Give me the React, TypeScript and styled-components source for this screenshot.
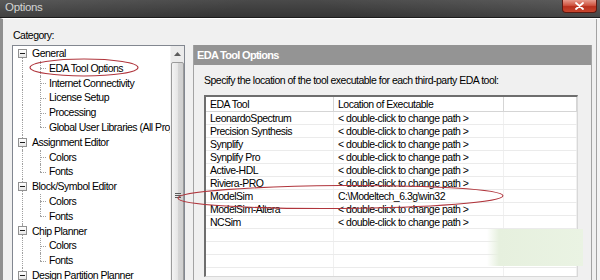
import React from "react";
import styled, { createGlobalStyle } from "styled-components";

const FONT = `"Liberation Sans", Arial, sans-serif`;

const GlobalStyle = createGlobalStyle`
  html, body { margin: 0; padding: 0; background: #f0f0f0; overflow: hidden; }
  * { box-sizing: border-box; }
`;

const Window = styled.div`
  width: 600px;
  height: 280px;
  position: relative;
  overflow: hidden;
  display: flex;
  flex-direction: column;
  font-family: ${FONT};
  font-size: 10.5px;
  letter-spacing: -0.5px;
  color: #000;
  background: #f0f0f0;
`;

const TitleBar = styled.div`
  height: 18px;
  flex: none;
  display: flex;
  align-items: flex-start;
  justify-content: space-between;
  padding-left: 5px;
  border-bottom: 1px solid #1c1c1c;
  background:
    linear-gradient(160deg, rgba(255,255,255,0.08) 0%, rgba(255,255,255,0) 40%),
    linear-gradient(200deg, rgba(255,255,255,0.10) 0%, rgba(255,255,255,0) 45%),
    linear-gradient(#4a4a4a, #353535);
`;

const Title = styled.span`
  font-size: 11.5px;
  letter-spacing: -0.3px;
  line-height: 15px;
  color: #d4d4d4;
`;

const CloseButton = styled.div`
  width: 35px;
  height: 13px;
  margin-right: 3px;
  display: flex;
  align-items: center;
  justify-content: center;
  border: 1px solid #5b1a12;
  border-top: none;
  border-radius: 0 0 4px 4px;
  background: linear-gradient(#e79a8c, #cf5440 45%, #b8301d 55%, #c8462e);
`;

const Body = styled.div`
  flex: 1;
  min-height: 0;
  display: flex;
  align-items: stretch;
  border-top: 1px solid #ffffff;
  border-left: 3px solid #8f8f8f;
  padding-left: 9px;
  padding-right: 8px;
  box-shadow: inset -3px 0 0 #f4f4f4, inset -4px 0 0 #a2a2a2;
`;

const LeftColumn = styled.div`
  width: 173px;
  flex: none;
  display: flex;
  flex-direction: column;
  padding-top: 9px;
`;

const CategoryLabel = styled.div`
  line-height: 14px;
  margin-bottom: 3px;
  padding-left: 1px;
`;

const TreeBox = styled.div`
  flex: 1;
  min-height: 0;
  display: flex;
  background: #fff;
  border: 1px solid #828790;
  border-bottom: none;
  overflow: hidden;
`;

const TreeList = styled.div`
  flex: 1;
  min-width: 0;
  overflow: hidden;
`;

const TreeRow = styled.div`
  display: flex;
  align-items: stretch;
  height: 14.8px;
  white-space: nowrap;
`;

type Line = "full" | "top" | "bottom" | "none";

const Guide = styled.span<{ $w: number; $v: Line; $branch?: boolean }>`
  position: relative;
  flex: none;
  width: ${(p) => p.$w}px;
  display: flex;
  align-items: center;
  &::before {
    content: "";
    display: ${(p) => (p.$v === "none" ? "none" : "block")};
    position: absolute;
    left: 9px;
    top: ${(p) => (p.$v === "bottom" ? "50%" : "0")};
    bottom: ${(p) => (p.$v === "top" ? "50%" : "0")};
    border-left: 1px dotted #a0a0a0;
  }
  &::after {
    content: "";
    display: ${(p) => (p.$branch ? "block" : "none")};
    position: absolute;
    left: 9px;
    top: 50%;
    width: 6px;
    border-top: 1px dotted #a0a0a0;
  }
`;

const ExpandBox = styled.span`
  position: relative;
  z-index: 1;
  margin-left: 5px;
  width: 9px;
  height: 9px;
  border: 1px solid #919191;
  background: linear-gradient(#ffffff, #e6e6e6);
  display: flex;
  align-items: center;
  justify-content: center;
  &::after {
    content: "";
    width: 5px;
    height: 1px;
    background: #1e1e1e;
  }
`;

const TreeLabel = styled.span`
  line-height: 14.8px;
  padding-left: 1px;
`;

const Scrollbar = styled.div`
  width: 14px;
  flex: none;
  display: flex;
  flex-direction: column;
  align-items: center;
  background: #ebebeb;
  border-left: 1px solid #f4f4f4;
`;

const ScrollArrow = styled.div`
  height: 16px;
  flex: none;
  display: flex;
  align-items: center;
  justify-content: center;
`;

const ScrollThumb = styled.div`
  width: 13px;
  height: 266px;
  flex: none;
  display: flex;
  align-items: center;
  justify-content: center;
  border: 1px solid #9b9b9b;
  border-radius: 2px;
  background: linear-gradient(to right, #f4f4f4, #e6e6e6 50%, #d6d6d6 51%, #cfcfcf);
`;

const Grip = styled.div`
  width: 6px;
  height: 5px;
  border-top: 1px solid #5a5a5a;
  border-bottom: 1px solid #5a5a5a;
  display: flex;
  align-items: center;
  &::after {
    content: "";
    width: 100%;
    height: 1px;
    background: #5a5a5a;
  }
`;

const Splitter = styled.div`
  width: 8px;
  flex: none;
`;

const Panel = styled.div`
  width: 399px;
  flex: none;
  margin-top: 26px;
  display: flex;
  flex-direction: column;
  border-left: 1px solid #a3a3a3;
  border-right: 1px solid #a3a3a3;
`;

const PanelHeader = styled.div`
  height: 20px;
  flex: none;
  background: #949494;
  color: #fff;
  font-weight: bold;
  font-size: 11px;
  letter-spacing: -0.7px;
  line-height: 20px;
  padding-left: 3px;
`;

const PanelBody = styled.div`
  flex: 1;
  padding: 9px 13px 0 10px;
`;

const Instruction = styled.div`
  line-height: 13px;
  margin-bottom: 8px;
  white-space: nowrap;
`;

const ListView = styled.div`
  height: 182px;
  background: #fff;
  border-top: 2px solid #6e6e6e;
  border-left: 2px solid #6e6e6e;
  border-right: 1px solid #d8d8d8;
  border-bottom: 1px solid #d8d8d8;
  overflow: hidden;
`;

const COLS = "128px 170px 1fr";

const HeaderRow = styled.div`
  display: grid;
  grid-template-columns: ${COLS};
  height: 15px;
  border-bottom: 1px solid #d5d5d5;
  background: #fff;
`;

const HeaderCell = styled.div`
  padding-left: 4px;
  line-height: 14px;
  border-right: 1px solid #d5d5d5;
  white-space: nowrap;
`;

const Row = styled.div`
  display: grid;
  grid-template-columns: ${COLS};
  height: 13px;
  border-bottom: 1px solid #ebebeb;
`;

const Cell = styled.div`
  padding-left: 4px;
  line-height: 12px;
  border-right: 1px solid #f0f0f0;
  white-space: nowrap;
  overflow: hidden;
`;

const Watermark = styled.div`
  position: absolute;
  left: 487px;
  top: 229px;
  width: 96px;
  height: 37px;
  background: linear-gradient(to right, rgba(229, 240, 220, 0) 0, #e6f0de 12px, #eaf3e3 100%);
  pointer-events: none;
`;

const Annotations = styled.svg`
  position: absolute;
  left: 0;
  top: 0;
  pointer-events: none;
`;

type TreeItem = { label: string; level: 0 | 1; last?: boolean; first?: boolean };

const tree: TreeItem[] = [
  { label: "General", level: 0, first: true },
  { label: "EDA Tool Options", level: 1 },
  { label: "Internet Connectivity", level: 1 },
  { label: "License Setup", level: 1 },
  { label: "Processing", level: 1 },
  { label: "Global User Libraries (All Projects)", level: 1, last: true },
  { label: "Assignment Editor", level: 0 },
  { label: "Colors", level: 1 },
  { label: "Fonts", level: 1, last: true },
  { label: "Block/Symbol Editor", level: 0 },
  { label: "Colors", level: 1 },
  { label: "Fonts", level: 1, last: true },
  { label: "Chip Planner", level: 0 },
  { label: "Colors", level: 1 },
  { label: "Fonts", level: 1, last: true },
  { label: "Design Partition Planner", level: 0 },
];

const tools: [string, string][] = [
  ["LeonardoSpectrum", "< double-click to change path >"],
  ["Precision Synthesis", "< double-click to change path >"],
  ["Synplify", "< double-click to change path >"],
  ["Synplify Pro", "< double-click to change path >"],
  ["Active-HDL", "< double-click to change path >"],
  ["Riviera-PRO", "< double-click to change path >"],
  ["ModelSim", "C:\\Modeltech_6.3g\\win32"],
  ["ModelSim-Altera", "< double-click to change path >"],
  ["NCSim", "< double-click to change path >"],
  ["", ""],
  ["", ""],
  ["", ""],
  ["", ""],
  ["", ""],
];

export default function App() {
  return (
    <>
      <GlobalStyle />
      <Window>
        <TitleBar>
          <Title>Options</Title>
          <CloseButton>
            <svg width="9" height="8" viewBox="0 0 9 8">
              <path d="M1 1 L8 7 M8 1 L1 7" stroke="#fff" strokeWidth="1.8" strokeLinecap="round" />
            </svg>
          </CloseButton>
        </TitleBar>
        <Body>
          <LeftColumn>
            <CategoryLabel>Category:</CategoryLabel>
            <TreeBox>
              <TreeList>
                {tree.map((t, i) =>
                  t.level === 0 ? (
                    <TreeRow key={i}>
                      <Guide $w={18} $v={t.first ? "bottom" : "full"}>
                        <ExpandBox />
                      </Guide>
                      <TreeLabel>{t.label}</TreeLabel>
                    </TreeRow>
                  ) : (
                    <TreeRow key={i}>
                      <Guide $w={18} $v="full" />
                      <Guide $w={17} $v={t.last ? "top" : "full"} $branch />
                      <TreeLabel>{t.label}</TreeLabel>
                    </TreeRow>
                  )
                )}
              </TreeList>
              <Scrollbar>
                <ScrollArrow>
                  <svg width="7" height="4" viewBox="0 0 7 4">
                    <path d="M0 4 L3.5 0 L7 4 Z" fill="#5c5c5c" />
                  </svg>
                </ScrollArrow>
                <ScrollThumb>
                  <Grip />
                </ScrollThumb>
              </Scrollbar>
            </TreeBox>
          </LeftColumn>
          <Splitter />
          <Panel>
            <PanelHeader>EDA Tool Options</PanelHeader>
            <PanelBody>
              <Instruction>
                Specify the location of the tool executable for each third-party EDA tool:
              </Instruction>
              <ListView>
                <HeaderRow>
                  <HeaderCell>EDA Tool</HeaderCell>
                  <HeaderCell>Location of Executable</HeaderCell>
                  <HeaderCell />
                </HeaderRow>
                {tools.map(([name, path], i) => (
                  <Row key={i}>
                    <Cell>{name}</Cell>
                    <Cell>{path}</Cell>
                    <Cell />
                  </Row>
                ))}
              </ListView>
            </PanelBody>
          </Panel>
        </Body>
        <Watermark />
        <Annotations width="600" height="280" viewBox="0 0 600 280">
          <ellipse cx="84" cy="67.5" rx="54" ry="8.5" fill="none" stroke="#b0353c" strokeWidth="1.1" />
          <ellipse cx="340.5" cy="197" rx="162.5" ry="11.5" fill="none" stroke="#b0353c" strokeWidth="1.1" transform="rotate(-0.4 340 197)" />
        </Annotations>
      </Window>
    </>
  );
}
